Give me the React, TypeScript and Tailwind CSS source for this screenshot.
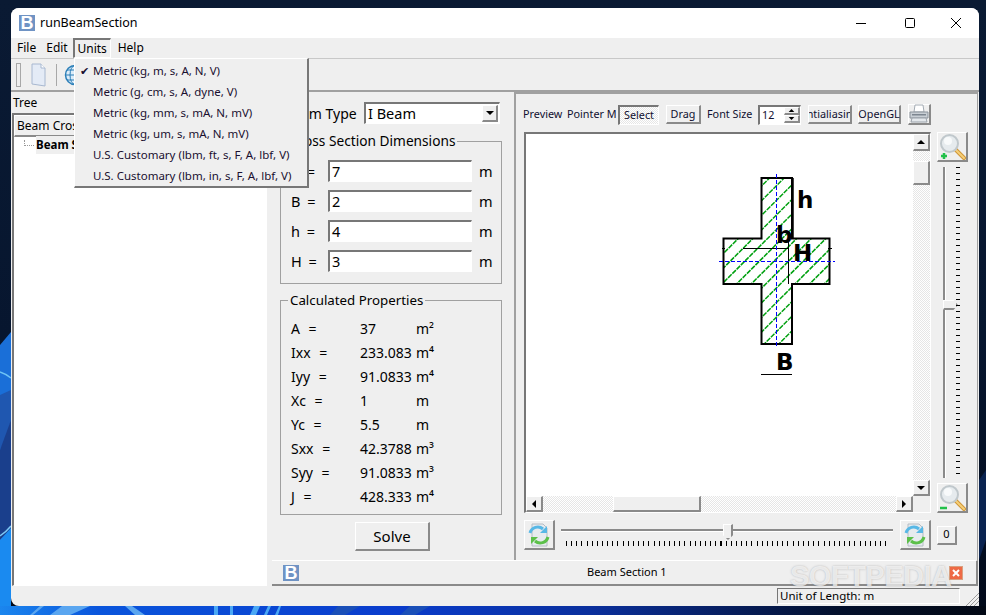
const raised = "border-t border-l border-t-white border-l-white border-r-2 border-b-2 border-r-[#8a8a8a] border-b-[#8a8a8a] bg-[#efefef]";
const sunken = "border-t-2 border-l-2 border-t-[#777777] border-l-[#777777] border-r border-b border-r-white border-b-white";
const dither = "bg-[conic-gradient(#e6e6e6_25%,#ffffff_0_50%,#e6e6e6_0_75%,#ffffff_0)] bg-[length:2px_2px]";

const units = [
  "Metric (kg, m, s, A, N, V)",
  "Metric (g, cm, s, A, dyne, V)",
  "Metric (kg, mm, s, mA, N, mV)",
  "Metric (kg, um, s, mA, N, mV)",
  "U.S. Customary (lbm, ft, s, F, A, lbf, V)",
  "U.S. Customary (lbm, in, s, F, A, lbf, V)",
];

const dims = [
  ["b =", "7"],
  ["B =", "2"],
  ["h =", "4"],
  ["H =", "3"],
];

const props = [
  ["A =", "37", "m²"],
  ["Ixx =", "233.083", "m⁴"],
  ["Iyy =", "91.0833", "m⁴"],
  ["Xc =", "1", "m"],
  ["Yc =", "5.5", "m"],
  ["Sxx =", "42.3788", "m³"],
  ["Syy =", "91.0833", "m³"],
  ["J =", "428.333", "m⁴"],
];

function Wallpaper() {
  return (
    <svg className="absolute inset-0" width="986" height="615">
      <defs>
        <linearGradient id="bg" x1="0" y1="0" x2="0" y2="1">
          <stop offset="0" stopColor="#0a1a33" />
          <stop offset="0.55" stopColor="#07162f" />
          <stop offset="1" stopColor="#020a1a" />
        </linearGradient>
        <linearGradient id="bottom" x1="0" y1="0" x2="1" y2="0">
          <stop offset="0" stopColor="#1b86ee" />
          <stop offset="0.1" stopColor="#0a55dc" />
          <stop offset="0.4" stopColor="#0a3ccc" />
          <stop offset="0.6" stopColor="#0a2f9c" />
          <stop offset="0.85" stopColor="#03102c" />
          <stop offset="1" stopColor="#020814" />
        </linearGradient>
      </defs>
      <rect width="986" height="615" fill="url(#bg)" />
      <path d="M0 345 L11 332 V615 H0Z" fill="#1a6fd8" />
      <path d="M0 395 L11 390 V420 Q6 440 0 450Z" fill="#1f57b0" />
      <path d="M0 450 L11 420 V530 L0 540Z" fill="#1a3f8c" />
      <path d="M0 540 L11 528 V615 H0Z" fill="#1a8af0" />
      <path d="M0 372 Q6 374 11 378" stroke="#6ec4f5" strokeWidth="1.5" fill="none" />
      <path d="M0 536 Q6 532 11 526" stroke="#7cc8f5" strokeWidth="1.5" fill="none" />
      <rect y="606" width="986" height="9" fill="url(#bottom)" />
      <path d="M30 615 L40 606 H44 L33 615Z M50 615 L62 606 H90 L70 615Z M125 606 L135 615 H145 L132 606Z" fill="#5aa6f0" />
      <path d="M214 606 H218 V615 H214Z M230 606 H233 V615 H230Z M250 615 L254 606 H260 L256 615Z M264 615 L268 606 H271 L267 615Z M275 615 L279 606 H281 L278 615Z" fill="#4aa8f5" />
      <path d="M330 615 L338 606 H360 L345 615Z M400 615 L410 606 H430 L415 615Z" fill="#1a4fb8" />
      <path d="M979 480 L986 470 V540 L979 560Z" fill="#0a2350" />
    </svg>
  );
}

function Page() {
  return (
    <svg width="17" height="26" viewBox="0 0 17 26">
      <path d="M2 2 H11 L15 6 V24 L2 22Z" fill="#e4ebf6" stroke="#a8b8d0" />
      <path d="M11 2 V6 H15" fill="#fff" stroke="#a8b8d0" />
    </svg>
  );
}

function Globe() {
  return (
    <svg width="22" height="22" viewBox="0 0 22 22">
      <circle cx="11" cy="11" r="9.5" fill="#dcecf8" stroke="#2c7fb8" strokeWidth="1.5" />
      <path d="M1.5 11 H20.5 M11 1.5 V20.5 M3 6 H19 M3 16 H19" stroke="#2c7fb8" />
      <ellipse cx="11" cy="11" rx="5" ry="9.5" fill="none" stroke="#2c7fb8" />
    </svg>
  );
}

function Logo() {
  return (
    <div className="w-4 h-4 bg-[#6f93c4] flex items-center justify-center text-white font-bold text-[18px] leading-none font-['Liberation_Sans',sans-serif]">
      B
    </div>
  );
}

function Magnifier({ plus }: { plus: boolean }) {
  return (
    <svg width="27" height="27" viewBox="0 0 27 27">
      <path d="M16 16 L25 25" stroke="#cf9638" strokeWidth="4" strokeLinecap="round" />
      <path d="M16 16 L25 25" stroke="#f6cf78" strokeWidth="2" strokeLinecap="round" />
      <circle cx="10.5" cy="10.5" r="8.5" fill="#e6ebee" stroke="#c0c8cc" strokeWidth="2" />
      <circle cx="9" cy="8" r="4" fill="#f8fafb" />
      {plus ? (
        <path d="M5 20 V26 M2 23 H8" stroke="#22c04a" strokeWidth="2.5" />
      ) : (
        <path d="M1 24 H8" stroke="#22c04a" strokeWidth="2.5" />
      )}
    </svg>
  );
}

function Refresh() {
  return (
    <svg width="24" height="26" viewBox="0 0 24 26">
      <path d="M5 2 H16 L20 6 V24 H5Z" fill="#e6ebef" stroke="#b4bcc4" />
      <path d="M3 11 A8 8 0 0 1 16 7" fill="none" stroke="#58b8e6" strokeWidth="3" />
      <path d="M13 11 H20 V4Z" fill="#58b8e6" />
      <path d="M21 15 A8 8 0 0 1 8 19" fill="none" stroke="#5cc04a" strokeWidth="3" />
      <path d="M11 15 H4 V22Z" fill="#5cc04a" />
    </svg>
  );
}

function Printer() {
  return (
    <svg width="20" height="20" viewBox="0 0 20 20">
      <path d="M6 1 H14 L15 8 H5Z" fill="#fff" stroke="#a4acb4" />
      <path d="M1 8 H19 V14 H1Z" fill="#c8ced4" stroke="#8a929a" />
      <path d="M3 14 H17 L18 18 H2Z" fill="#e4e8ec" stroke="#9aa2aa" />
      <rect x="3" y="10" width="14" height="1.5" fill="#7d8690" />
    </svg>
  );
}

function Arrow({ dir, size = 10 }: { dir: "up" | "down" | "left" | "right"; size?: number }) {
  const d = { up: "M1 7 H9 L5 3Z", down: "M1 3 H9 L5 7Z", left: "M7 1 V9 L3 5Z", right: "M3 1 V9 L7 5Z" }[dir];
  return (
    <svg width={size} height={size} viewBox="0 0 10 10">
      <path d={d} fill="#000" />
    </svg>
  );
}

function Section() {
  const hatch = Array.from({ length: 32 }, (_, i) => 510 + i * 14.6);
  const outline = "M761.5 178 H792 V238.5 H829.5 V284 H792 V344 H761.5 V284 H723.5 V238.5 H761.5Z";
  return (
    <svg className="block w-full h-full" viewBox="526 134 387 362">
      <defs>
        <clipPath id="cross">
          <path d={outline} />
        </clipPath>
      </defs>
      <g clipPath="url(#cross)">
        {hatch.map((x) => (
          <line key={x} x1={x} y1="350" x2={x + 180} y2="170" stroke="#00a010" strokeWidth="1.5" strokeDasharray="5 1" />
        ))}
      </g>
      <path d={outline} fill="none" stroke="#000" strokeWidth="2" />
      <line x1="792.5" y1="178" x2="792.5" y2="238" stroke="#000" strokeWidth="2.5" />
      <line x1="743" y1="248.5" x2="788" y2="248.5" stroke="#000" />
      <line x1="722" y1="248.5" x2="725" y2="248.5" stroke="#000" />
      <line x1="828" y1="248.5" x2="832" y2="248.5" stroke="#000" />
      <line x1="788.5" y1="238" x2="788.5" y2="284" stroke="#000" />
      <line x1="761" y1="374.5" x2="792" y2="374.5" stroke="#000" />
      <line x1="776.5" y1="174" x2="776.5" y2="347" stroke="#0000ff" strokeDasharray="4 2" />
      <line x1="719" y1="261.5" x2="835" y2="261.5" stroke="#0000ff" strokeDasharray="4 2" />
      <g fontFamily="'DejaVu Sans', sans-serif" fontWeight="700" fontSize="23" fill="#000">
        <text x="797" y="208">h</text>
        <text x="776" y="243">b</text>
        <text x="793" y="261">H</text>
        <text x="776" y="370">B</text>
      </g>
    </svg>
  );
}

export default function App() {
  return (
    <div className="relative w-[986px] h-[615px] overflow-hidden font-['Noto_Sans',sans-serif] text-[12px] text-black">
      <Wallpaper />
      <div className="relative ml-[11px] mt-[8px] w-[968px] h-[598px] rounded-t-lg rounded-bl-lg bg-[#efefef] flex flex-col">
        {/* title bar */}
        <div className="h-[30px] bg-white rounded-t-lg flex items-center pl-[8px]">
          <Logo />
          <span className="ml-[5px] text-[12.5px]">runBeamSection</span>
          <div className="ml-auto flex items-center pr-[17px]">
            <svg width="12" height="12" viewBox="0 0 12 12"><path d="M1 6.5 H11" stroke="#000" /></svg>
            <svg className="ml-[37px]" width="12" height="12" viewBox="0 0 12 12"><rect x="1.5" y="1.5" width="9" height="9" rx="1" fill="none" stroke="#000" /></svg>
            <svg className="ml-[34px]" width="12" height="12" viewBox="0 0 12 12"><path d="M1 1 L11 11 M11 1 L1 11" stroke="#000" /></svg>
          </div>
        </div>

        {/* menu */}
        <div className="relative h-[20px] flex items-center pl-[2px] text-[12px]">
          <span className="px-[4px]">File</span>
          <span className="px-[4px] ml-[2px]">Edit</span>
          <span className={`ml-px h-[20px] w-[38px] flex items-center justify-center ${sunken}`}>Units</span>
          <span className="px-[4px] ml-[3px]">Help</span>
          <div className="absolute z-10 left-[63px] top-[20px] w-[235px] h-[130px] pt-px text-[11.5px] bg-[#efefef] border-t border-l border-t-white border-l-white border-r-2 border-b-2 border-r-[#777777] border-b-[#777777]">
            {units.map((u, i) => (
              <div key={u} className="h-[21px] flex items-center text-[#1a1030]">
                <span className="w-[18px] text-center text-[11px] leading-none">{i === 0 ? "✔" : ""}</span>
                <span>{u}</span>
              </div>
            ))}
          </div>
        </div>

        {/* toolbar */}
        <div className="h-[34px] border-t border-t-[#c8c8c8] border-b-2 border-b-[#a0a0a0] flex items-center pl-[5px]">
          <div className="w-[5px] h-[24px] border border-[#a8a8a8]" />
          <div className="ml-[9px]"><Page /></div>
          <div className="ml-[9px] w-px h-[22px] bg-[#a8a8a8]" />
          <div className="ml-[7px]"><Globe /></div>
        </div>

        {/* body */}
        <div className="flex-1 flex min-h-0">
          {/* tree dock */}
          <div className="w-[256px] pl-px flex flex-col">
            <div className="h-[21px] pl-px flex items-center">Tree</div>
            <div className={`flex-1 bg-white ${sunken}`}>
              <div className={`h-[22px] pl-[2px] flex items-center ${raised}`}>Beam Cross Section</div>
              <div className="h-[16px] flex items-center pl-[10px]">
                <span className="w-[10px] h-[6px] mb-[5px] border-l border-b border-dotted border-[#999999]" />
                <span className="ml-[2px] font-bold text-[11.5px] bg-[#efefef]">Beam Section 1</span>
              </div>
            </div>
          </div>

          {/* mdi area */}
          <div className="w-[706px] ml-[5px] flex flex-col">
            <div className="h-[468px] flex">
              {/* properties */}
              <div className="w-[242px] pl-[8px] pr-[12px] pt-[10px] flex flex-col">
                <div className="h-[22px] flex items-center text-[14px]">
                  <span className="w-[84px] pl-[4px]">Beam Type</span>
                  <div className={`w-[136px] h-[22px] bg-white flex items-center pl-[2px] pr-px ${sunken}`}>
                    <span className="flex-1 text-[14.5px]">I Beam</span>
                    <span className={`w-[16px] h-[17px] flex items-center justify-center ${raised}`}><Arrow dir="down" /></span>
                  </div>
                </div>
                <fieldset className="mt-[8px] h-[152px] min-w-0 border border-[#a0a0a0] pl-[10px] pr-[4px] pt-[10px]">
                  <legend className="ml-[-3px] px-[2px] text-[13.7px] leading-[18px]">Cross Section Dimensions</legend>
                  <div className="flex flex-col gap-[8px]">
                    {dims.map(([l, v]) => (
                      <div key={l} className="h-[22px] flex items-center text-[14.5px]">
                        <span className="w-[37px] pt-px [word-spacing:3px]">{l}</span>
                        <div className={`w-[144px] h-[22px] bg-white pl-[2px] flex items-center ${sunken}`}>{v}</div>
                        <span className="ml-[7px] pt-px">m</span>
                      </div>
                    ))}
                  </div>
                </fieldset>
                <fieldset className="mt-[7px] h-[224px] min-w-0 border border-[#a0a0a0] px-[10px] pt-[7px]">
                  <legend className="ml-[-3px] px-[2px] text-[13.3px] leading-[18px]">Calculated Properties</legend>
                  <div className="flex flex-col">
                    {props.map(([l, v, u]) => (
                      <div key={l} className="h-[24px] flex items-center text-[14px]">
                        <span className="w-[69px] [word-spacing:5px]">{l}</span>
                        <span className="w-[56px]">{v}</span>
                        <span>{u}</span>
                      </div>
                    ))}
                  </div>
                </fieldset>
                <div className={`mt-[7px] self-center ml-[3px] w-[75px] h-[29px] flex items-center justify-center text-[15px] ${raised}`}>Solve</div>
              </div>

              {/* preview */}
              <div className="w-[464px] border-t-2 border-l-2 border-t-[#a0a0a0] border-l-[#a0a0a0] border-r border-r-[#a0a0a0] flex flex-col pl-[8px]">
                <div className="mt-[10px] h-[21px] flex items-center text-[10.8px] text-[#101030]">
                  <span className="ml-[-1px] w-[44px]">Preview</span>
                  <span className="w-[51px]">Pointer M</span>
                  <div className={`w-[41px] h-[20px] flex items-center justify-center ${dither} ${sunken}`}>Select</div>
                  <div className={`ml-[7px] w-[35px] h-[19px] flex items-center justify-center ${raised}`}>Drag</div>
                  <span className="ml-[6px] w-[51px]">Font Size</span>
                  <div className={`w-[43px] h-[20px] bg-white flex items-center pl-px ${sunken}`}>
                    <span className="flex-1 pl-px">12</span>
                    <div className="w-[16px] flex flex-col">
                      <span className={`h-[8px] flex items-center justify-center overflow-hidden ${raised}`}><Arrow dir="up" size={7} /></span>
                      <span className={`h-[8px] flex items-center justify-center overflow-hidden ${raised}`}><Arrow dir="down" size={7} /></span>
                    </div>
                  </div>
                  <div className={`ml-[7px] w-[44px] h-[19px] overflow-hidden flex items-center justify-center ${raised}`}><span className="whitespace-nowrap">ntialiasin</span></div>
                  <div className={`ml-[6px] w-[43px] h-[19px] flex items-center justify-center ${raised}`}>OpenGL</div>
                  <div className={`ml-[7px] w-[23px] h-[21px] flex items-center justify-center ${raised}`}><Printer /></div>
                </div>
                <div className="mt-[7px] flex">
                  <div className={`w-[407px] h-[381px] grid grid-cols-[1fr_17px] grid-rows-[1fr_16px] bg-white ${sunken}`}>
                    <div className="min-h-0 min-w-0"><Section /></div>
                    <div className={`flex flex-col ${dither}`}>
                      <div className={`h-[17px] flex items-center justify-center ${raised}`}><Arrow dir="up" /></div>
                      <div className={`mt-[10px] h-[24px] ${raised}`} />
                      <div className={`mt-auto h-[16px] flex items-center justify-center ${raised}`}><Arrow dir="down" /></div>
                    </div>
                    <div className={`flex ${dither}`}>
                      <div className={`w-[17px] flex items-center justify-center ${raised}`}><Arrow dir="left" /></div>
                      <div className={`ml-[70px] w-[88px] ${raised}`} />
                      <div className={`ml-auto w-[17px] flex items-center justify-center ${raised}`}><Arrow dir="right" /></div>
                    </div>
                    <div className="bg-[#efefef]" />
                  </div>
                  <div className="ml-[6px] w-[31px] flex flex-col">
                    <div className={`w-[31px] h-[30px] flex items-center justify-center ${raised}`}><Magnifier plus /></div>
                    <div className="relative flex-1 mx-[6px] my-[5px] border-l-2 border-l-[#8a8a8a] border-r border-r-white w-[3px]">
                      <div className={`absolute left-[-2px] top-[133px] w-[15px] h-[10px] [clip-path:polygon(0_0,70%_0,100%_50%,70%_100%,0_100%)] ${raised}`} />
                      <div className="absolute left-[11px] top-0 bottom-0 w-[4px] bg-[repeating-linear-gradient(to_bottom,#000_0,#000_1px,transparent_1px,transparent_6px)]" />
                    </div>
                    <div className={`w-[31px] h-[30px] flex items-center justify-center ${raised}`}><Magnifier plus={false} /></div>
                  </div>
                </div>
                <div className="mt-[7px] flex items-center">
                  <div className={`w-[31px] h-[30px] flex items-center justify-center ${raised}`}><Refresh /></div>
                  <div className="relative ml-[6px] w-[332px] h-[30px]">
                    <div className="absolute top-[9px] left-0 right-0 h-[3px] border-t-2 border-t-[#8a8a8a] border-b border-b-white" />
                    <div className={`absolute top-[4px] left-[162px] w-[10px] h-[16px] [clip-path:polygon(0_0,100%_0,100%_70%,50%_100%,0_70%)] ${raised}`} />
                    <div className="absolute top-[21px] left-[5px] right-[4px] h-[5px] bg-[repeating-linear-gradient(to_right,#000_0,#000_1px,transparent_1px,transparent_5.15px)]" />
                  </div>
                  <div className={`ml-[7px] w-[31px] h-[30px] flex items-center justify-center ${raised}`}><Refresh /></div>
                  <div className={`ml-[6px] w-[20px] h-[19px] flex items-center justify-center text-[11px] ${raised}`}>0</div>
                </div>
              </div>
            </div>

            {/* mdi tab */}
            <div className="relative h-[26px] border-t border-t-white border-b-2 border-b-[#8a8a8a] border-r-2 border-r-[#8a8a8a] flex items-center pl-[11px]">
              <Logo />
              <span className="ml-[288px] text-[11px]">Beam Section 1</span>
              <div className="ml-auto mr-[13px] w-[14px] h-[14px] bg-[#ee6a45] border border-[#d9a080] flex items-center justify-center">
                <svg width="10" height="10" viewBox="0 0 10 10"><path d="M2 2 L8 8 M8 2 L2 8" stroke="#fff" strokeWidth="2" /></svg>
              </div>
              <span className="absolute left-[518px] top-0 text-[29px] leading-[30px] font-bold tracking-[-0.5px] text-white/70 font-['Liberation_Sans',sans-serif] [text-shadow:0_0_2px_rgba(120,120,120,0.5)]">SOFTPEDIA</span>
            </div>
          </div>
        </div>

        {/* status bar */}
        <div className="h-[20px] flex items-center justify-end pr-[19px]">
          <div className="w-[183px] h-[16px] border-t border-l border-t-[#777777] border-l-[#777777] border-r border-b border-r-white border-b-white pl-[2px] flex items-center text-[11.5px]">Unit of Length: m</div>
        </div>
        <svg className="absolute right-0 bottom-0" width="14" height="14" viewBox="0 0 14 14">
          <path d="M14 1 L1 14 M14 5 L5 14 M14 9 L9 14" stroke="#9a9a9a" />
        </svg>
      </div>
    </div>
  );
}
